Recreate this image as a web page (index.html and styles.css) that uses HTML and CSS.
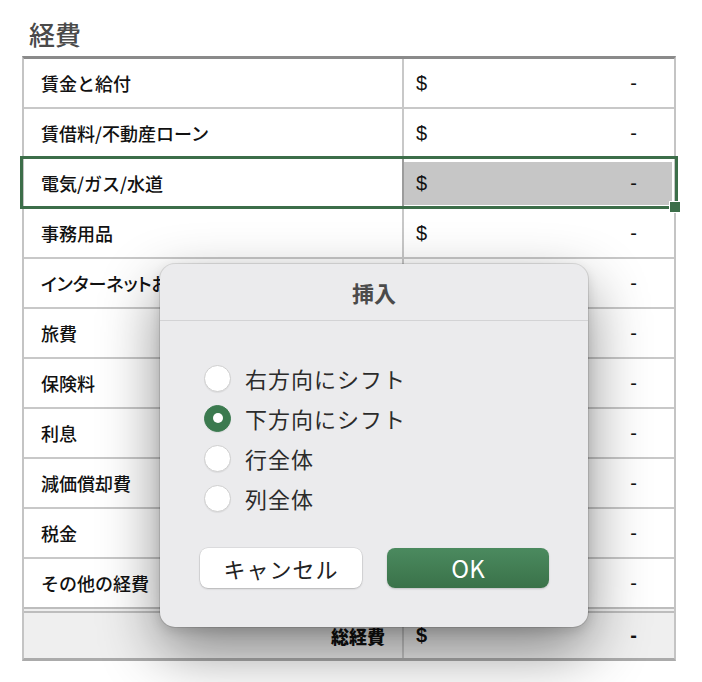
FILE: index.html
```html
<!DOCTYPE html>
<html lang="ja">
<head>
<meta charset="utf-8">
<title>経費</title>
<link rel="stylesheet" href="styles.css">
</head>
<body>
<div class="sheet">
  <h1 class="title">経費</h1>
  <div class="table">
    <div class="row"><div class="label">賃金と給付</div><div class="val"><span>$</span><span>-</span></div></div>
    <div class="row"><div class="label">賃借料/不動産ローン</div><div class="val"><span>$</span><span>-</span></div></div>
    <div class="row active"><div class="label">電気/ガス/水道</div><div class="val sel-cell"><span>$</span><span>-</span></div><div class="sel"><div class="handle"></div></div></div>
    <div class="row"><div class="label">事務用品</div><div class="val"><span>$</span><span>-</span></div></div>
    <div class="row"><div class="label kana">インターネットおよび電話</div><div class="val"><span>$</span><span>-</span></div></div>
    <div class="row"><div class="label">旅費</div><div class="val"><span>$</span><span>-</span></div></div>
    <div class="row"><div class="label">保険料</div><div class="val"><span>$</span><span>-</span></div></div>
    <div class="row"><div class="label">利息</div><div class="val"><span>$</span><span>-</span></div></div>
    <div class="row"><div class="label">減価償却費</div><div class="val"><span>$</span><span>-</span></div></div>
    <div class="row"><div class="label">税金</div><div class="val"><span>$</span><span>-</span></div></div>
    <div class="row last"><div class="label">その他の経費</div><div class="val"><span>$</span><span>-</span></div></div>
    <div class="row total"><div class="label">総経費</div><div class="val"><span>$</span><span>-</span></div></div>
  </div>
</div>

<div class="dialog">
  <div class="dlg-title">挿入</div>
  <div class="options">
    <label class="opt"><span class="radio"></span><span>右方向にシフト</span></label>
    <label class="opt"><span class="radio on"></span><span>下方向にシフト</span></label>
    <label class="opt"><span class="radio"></span><span>行全体</span></label>
    <label class="opt"><span class="radio"></span><span>列全体</span></label>
  </div>
  <div class="buttons">
    <button class="btn cancel">キャンセル</button>
    <button class="btn ok">OK</button>
  </div>
</div>
</body>
</html>
```

FILE: styles.css
```css
html, body {
  margin: 0;
  padding: 0;
  background: #ffffff;
}
body {
  font-family: "Noto Sans CJK JP", "Noto Sans", sans-serif;
  color: #111111;
  width: 702px;
  height: 682px;
  overflow: hidden;
  position: relative;
}
.sheet {
  padding: 17px 0 0 22px;
}
.title {
  margin: 0 0 6px 7px;
  font-size: 26px;
  line-height: 33px;
  font-weight: 500;
  color: #4a4a4a;
}
.table {
  width: 654px;
  box-sizing: border-box;
  border-top: 3px solid #8a8a8a;
  border-left: 2px solid #c4c4c4;
  border-right: 2px solid #c4c4c4;
  border-bottom: 3px solid #ababab;
}
.row {
  display: flex;
  height: 50px;
  box-sizing: border-box;
  border-bottom: 2px solid #c8c8c8;
  font-size: 18px;
  font-weight: 500;
  position: relative;
}
.row.last {
  border-bottom: 0;
  height: 48px;
}
.label {
  width: 378px;
  box-sizing: border-box;
  padding-left: 17px;
  display: flex;
  align-items: center;
  white-space: nowrap;
  overflow: hidden;
}
.label.kana {
  font-feature-settings: "palt";
}
.val {
  flex: 1;
  border-left: 2px solid #c8c8c8;
  display: flex;
  align-items: center;
  justify-content: space-between;
  padding: 0 37px 0 12px;
  font-family: "Liberation Sans", "Noto Sans", sans-serif;
  font-size: 20px;
  font-weight: 400;
}
.sel-cell {
  background: #c6c6c6;
  border-left-color: #9c9c9c;
  box-shadow: inset 0 3px 0 #ffffff, inset 0 -2px 0 #ffffff, inset -2px 0 0 #ffffff;
}
.sel {
  position: absolute;
  top: -3px;
  left: -4px;
  right: -4px;
  bottom: -2px;
  border: 3px solid #3c6e49;
  pointer-events: none;
}
.handle {
  position: absolute;
  right: -6px;
  bottom: -7px;
  width: 10px;
  height: 10px;
  background: #3c6e49;
  border: 1px solid #ffffff;
}
.row.total {
  height: 51px;
  border-top: 6px double #bdbdbd;
  border-bottom: 0;
  background: #efefef;
  font-weight: 900;
}
.row.total .label {
  justify-content: flex-end;
  padding: 0 17px 0 0;
}
.row.total .val {
  font-weight: 700;
}

/* dialog */
.dialog {
  position: absolute;
  left: 160px;
  top: 264px;
  width: 428px;
  height: 363px;
  box-sizing: border-box;
  background: #ebebed;
  border-radius: 15px;
  box-shadow: 0 0 0 1px rgba(0,0,0,0.10), 0 24px 60px rgba(0,0,0,0.45), 0 4px 12px rgba(0,0,0,0.12);
  display: flex;
  flex-direction: column;
}
.dlg-title {
  height: 56px;
  line-height: 56px;
  text-align: center;
  font-size: 22px;
  font-weight: 700;
  color: #4b4b4b;
  border-bottom: 1px solid #d3d3d5;
}
.options {
  display: flex;
  flex-direction: column;
  padding: 37px 0 0 44px;
}
.opt {
  display: flex;
  align-items: center;
  height: 40px;
  font-size: 22px;
  letter-spacing: 1px;
  color: #2b2b2b;
}
.radio {
  width: 25px;
  height: 25px;
  border-radius: 50%;
  background: #ffffff;
  border: 1px solid #cfcfcf;
  box-shadow: 0 1px 1px rgba(0,0,0,0.06);
  margin-right: 14px;
  flex-shrink: 0;
  position: relative;
}
.radio.on {
  background: #3b7a4f;
  border-color: #3b7a4f;
}
.radio.on::after {
  content: "";
  position: absolute;
  left: 7.5px;
  top: 7.5px;
  width: 10px;
  height: 10px;
  border-radius: 50%;
  background: #ffffff;
}
.buttons {
  display: flex;
  gap: 25px;
  padding: 30px 0 0 40px;
}
.btn {
  width: 162px;
  height: 40px;
  border-radius: 8px;
  border: 0;
  font-family: "Noto Sans CJK JP", "Noto Sans", sans-serif;
  font-size: 22px;
  line-height: 40px;
  padding: 0;
}
.btn.cancel {
  background: #ffffff;
  color: #222222;
  letter-spacing: 1px;
  box-shadow: 0 0 0 0.5px rgba(0,0,0,0.12), 0 1px 2px rgba(0,0,0,0.18);
}
.btn.ok {
  background: linear-gradient(#4b8a5f, #3a7249);
  color: #ffffff;
  font-size: 24px;
  font-weight: 400;
  box-shadow: 0 1px 2px rgba(0,0,0,0.18);
}
```
